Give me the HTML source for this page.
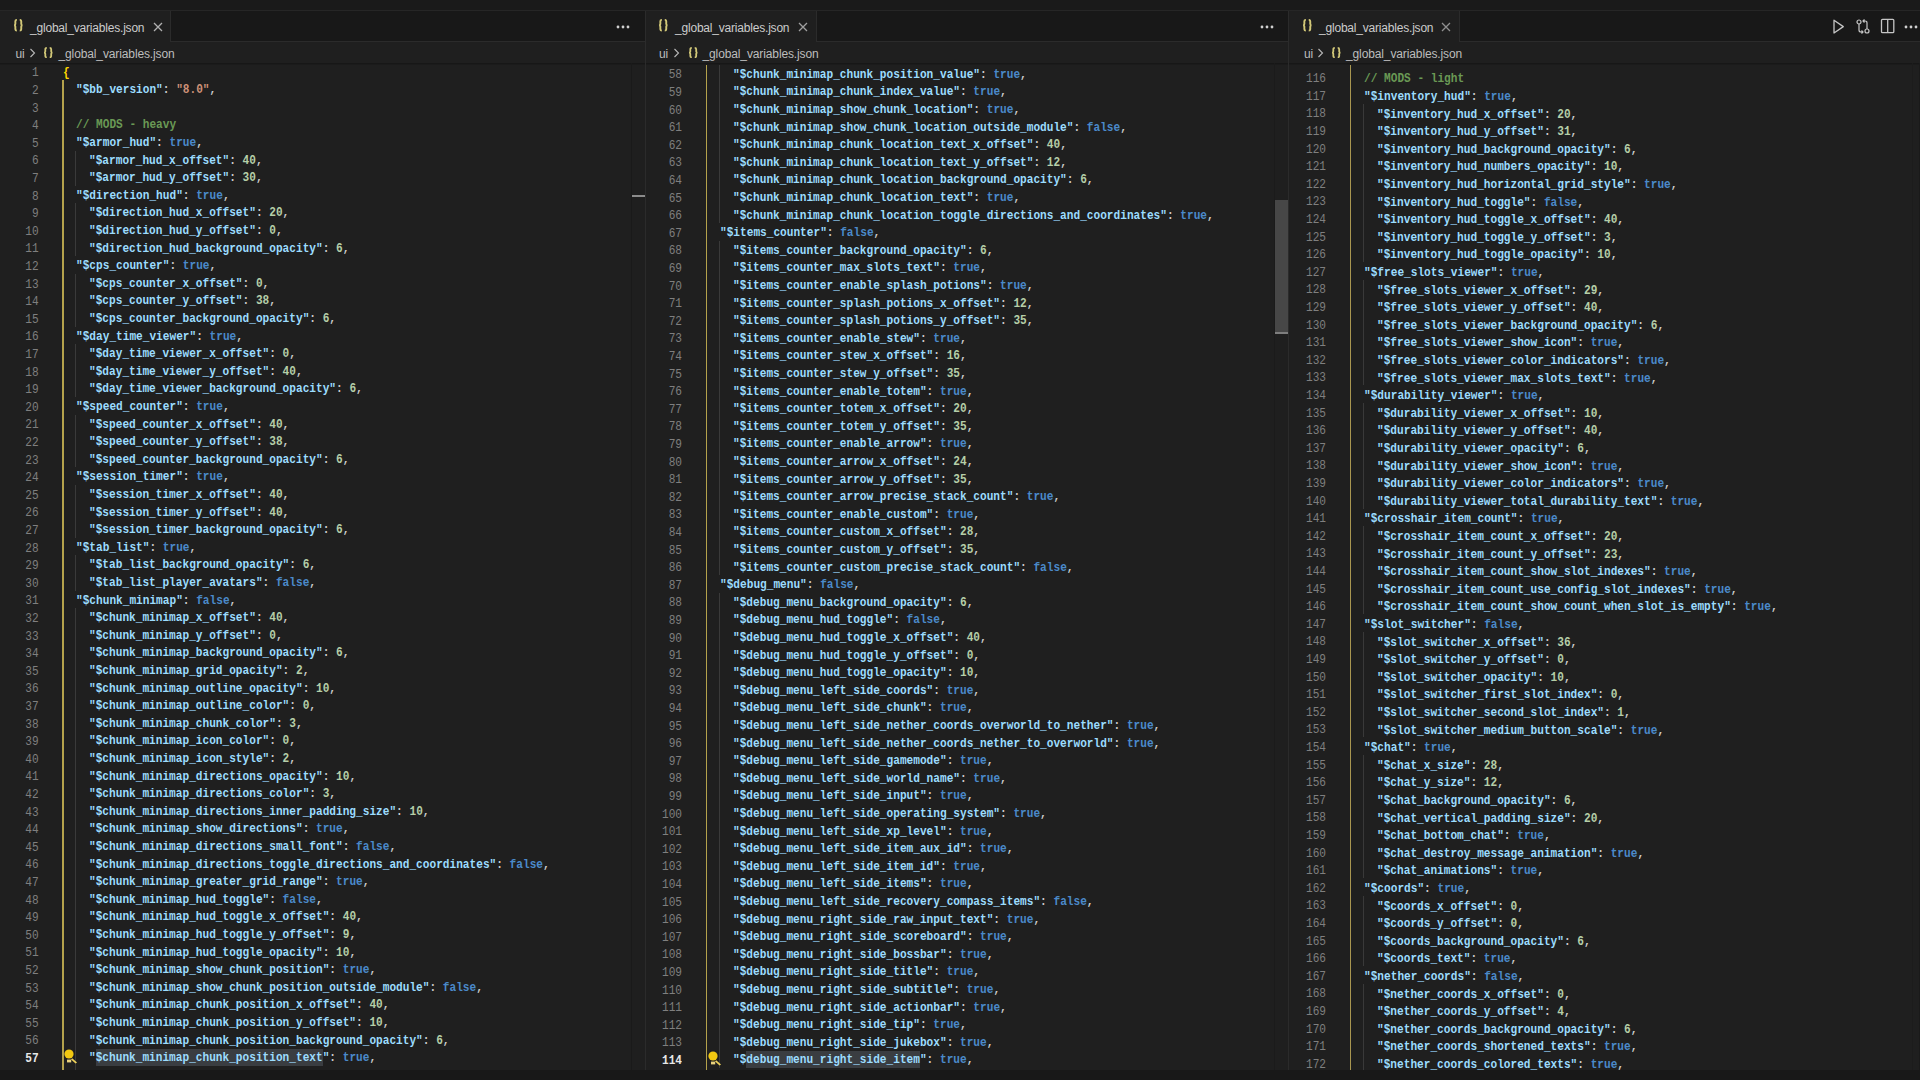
<!DOCTYPE html>
<html><head><meta charset="utf-8"><style>
*{margin:0;padding:0;box-sizing:border-box}
html,body{width:1920px;height:1080px;overflow:hidden;background:#181818}
body{position:relative;font-family:"Liberation Sans",sans-serif}
.ed{position:absolute;background:#1f1f1f;overflow:hidden}
.ln{position:absolute;white-space:pre;font-family:"Liberation Mono",monospace;font-size:12.6px;transform:scaleX(0.88336);transform-origin:0 0;font-weight:bold;line-height:17.6px;height:17.6px;color:#cccccc}
.lnum{position:absolute;left:0;text-align:right;font-family:"Liberation Mono",monospace;font-size:12px;transform:scaleX(0.927);transform-origin:100% 0;line-height:17.6px;color:#7f7f7f}
.lnum.act{color:#e8e8e8;font-weight:bold}
i{font-style:normal}
.k{color:#9cdcfe} .s{color:#ce9178} .n{color:#b5cea8} .w{color:#4b8aca} .c{color:#6a9955} .b{color:#ffd700}
.yg{position:absolute}
.gg{position:absolute;width:1px}
.sel{position:absolute;background:#3a3d41}
.tl{position:absolute;font-size:12px;line-height:16px;color:#cccccc;letter-spacing:-0.2px;white-space:pre}
.bc{position:absolute;font-size:12px;line-height:16px;color:#bdbdbd;letter-spacing:-0.12px;white-space:pre}
</style></head>
<body>
<div style="position:absolute;left:0;top:0;width:1920px;height:10px;background:#1a1a1a"></div>
<div style="position:absolute;left:0;top:10px;width:1920px;height:1px;background:#262626"></div>
<div style="position:absolute;left:0;top:1070px;width:1920px;height:10px;background:#181818"></div>
<div style="position:absolute;left:645px;top:11px;width:1px;height:1059px;background:#2b2b2b"></div>
<div style="position:absolute;left:1288px;top:11px;width:1px;height:1059px;background:#2b2b2b"></div>
<div style="position:absolute;left:171px;top:41px;width:474px;height:1px;background:#2b2b2b"></div>
<div style="position:absolute;left:0px;top:11px;width:170px;height:31px;background:#1f1f1f"></div>
<div style="position:absolute;left:170px;top:11px;width:1px;height:31px;background:#2b2b2b"></div>
<svg style="position:absolute;left:12.7px;top:19.3px" width="10.6" height="12.5" viewBox="0 0 10.6 12.5"><path d="M3.85 0.90Q2.35 0.90 2.35 2.30V5.05Q2.35 6.25 1.05 6.25Q2.35 6.25 2.35 7.45V10.20Q2.35 11.60 3.85 11.60M6.75 0.90Q8.25 0.90 8.25 2.30V5.05Q8.25 6.25 9.55 6.25Q8.25 6.25 8.25 7.45V10.20Q8.25 11.60 6.75 11.60" stroke="#d2c878" stroke-width="1.9" fill="none"/></svg>
<div class="tl" style="left:30px;top:19.8px">_global_variables.json</div>
<svg style="position:absolute;left:152.5px;top:21.5px" width="10" height="10" viewBox="0 0 10 10"><path d="M1 1L9 9M9 1L1 9" stroke="#b0b0b0" stroke-width="1.3"/></svg>
<svg style="position:absolute;left:616px;top:23.5px" width="14" height="6" viewBox="0 0 14 6"><circle cx="2" cy="3" r="1.4" fill="#d0d0d0"/><circle cx="7" cy="3" r="1.4" fill="#d0d0d0"/><circle cx="12" cy="3" r="1.4" fill="#d0d0d0"/></svg>
<div style="position:absolute;left:0px;top:42px;width:645px;height:21px;background:#1f1f1f"></div>
<div class="bc" style="left:15.5px;top:46px">ui</div>
<svg style="position:absolute;left:29px;top:48px" width="7" height="10" viewBox="0 0 7 10"><path d="M1.5 1L5.5 5L1.5 9" stroke="#b8b8b8" stroke-width="1.1" fill="none"/></svg>
<svg style="position:absolute;left:43px;top:47.3px" width="10.5" height="11.2" viewBox="0 0 10.5 11.2"><path d="M3.80 0.90Q2.30 0.90 2.30 2.30V4.40Q2.30 5.60 1.00 5.60Q2.30 5.60 2.30 6.80V8.90Q2.30 10.30 3.80 10.30M6.70 0.90Q8.20 0.90 8.20 2.30V4.40Q8.20 5.60 9.50 5.60Q8.20 5.60 8.20 6.80V8.90Q8.20 10.30 6.70 10.30" stroke="#d2c878" stroke-width="1.8" fill="none"/></svg>
<div class="bc" style="left:58.5px;top:46px">_global_variables.json</div>
<div style="position:absolute;left:817px;top:41px;width:471px;height:1px;background:#2b2b2b"></div>
<div style="position:absolute;left:646px;top:11px;width:170px;height:31px;background:#1f1f1f"></div>
<div style="position:absolute;left:816px;top:11px;width:1px;height:31px;background:#2b2b2b"></div>
<svg style="position:absolute;left:657.7px;top:19.3px" width="10.6" height="12.5" viewBox="0 0 10.6 12.5"><path d="M3.85 0.90Q2.35 0.90 2.35 2.30V5.05Q2.35 6.25 1.05 6.25Q2.35 6.25 2.35 7.45V10.20Q2.35 11.60 3.85 11.60M6.75 0.90Q8.25 0.90 8.25 2.30V5.05Q8.25 6.25 9.55 6.25Q8.25 6.25 8.25 7.45V10.20Q8.25 11.60 6.75 11.60" stroke="#d2c878" stroke-width="1.9" fill="none"/></svg>
<div class="tl" style="left:675px;top:19.8px">_global_variables.json</div>
<svg style="position:absolute;left:797.5px;top:21.5px" width="10" height="10" viewBox="0 0 10 10"><path d="M1 1L9 9M9 1L1 9" stroke="#a0a0a0" stroke-width="1.3"/></svg>
<svg style="position:absolute;left:1260px;top:23.5px" width="14" height="6" viewBox="0 0 14 6"><circle cx="2" cy="3" r="1.4" fill="#d0d0d0"/><circle cx="7" cy="3" r="1.4" fill="#d0d0d0"/><circle cx="12" cy="3" r="1.4" fill="#d0d0d0"/></svg>
<div style="position:absolute;left:646px;top:42px;width:642px;height:21px;background:#1f1f1f"></div>
<div class="bc" style="left:659px;top:46px">ui</div>
<svg style="position:absolute;left:673px;top:48px" width="7" height="10" viewBox="0 0 7 10"><path d="M1.5 1L5.5 5L1.5 9" stroke="#b8b8b8" stroke-width="1.1" fill="none"/></svg>
<svg style="position:absolute;left:687.5px;top:47.3px" width="10.5" height="11.2" viewBox="0 0 10.5 11.2"><path d="M3.80 0.90Q2.30 0.90 2.30 2.30V4.40Q2.30 5.60 1.00 5.60Q2.30 5.60 2.30 6.80V8.90Q2.30 10.30 3.80 10.30M6.70 0.90Q8.20 0.90 8.20 2.30V4.40Q8.20 5.60 9.50 5.60Q8.20 5.60 8.20 6.80V8.90Q8.20 10.30 6.70 10.30" stroke="#d2c878" stroke-width="1.8" fill="none"/></svg>
<div class="bc" style="left:702.5px;top:46px">_global_variables.json</div>
<div style="position:absolute;left:1460px;top:41px;width:460px;height:1px;background:#2b2b2b"></div>
<div style="position:absolute;left:1289px;top:11px;width:170px;height:31px;background:#1f1f1f"></div>
<div style="position:absolute;left:1459px;top:11px;width:1px;height:31px;background:#2b2b2b"></div>
<svg style="position:absolute;left:1301.7px;top:19.3px" width="10.6" height="12.5" viewBox="0 0 10.6 12.5"><path d="M3.85 0.90Q2.35 0.90 2.35 2.30V5.05Q2.35 6.25 1.05 6.25Q2.35 6.25 2.35 7.45V10.20Q2.35 11.60 3.85 11.60M6.75 0.90Q8.25 0.90 8.25 2.30V5.05Q8.25 6.25 9.55 6.25Q8.25 6.25 8.25 7.45V10.20Q8.25 11.60 6.75 11.60" stroke="#d2c878" stroke-width="1.9" fill="none"/></svg>
<div class="tl" style="left:1319px;top:19.8px">_global_variables.json</div>
<svg style="position:absolute;left:1441px;top:21.5px" width="10" height="10" viewBox="0 0 10 10"><path d="M1 1L9 9M9 1L1 9" stroke="#909090" stroke-width="1.3"/></svg>
<div style="position:absolute;left:1289px;top:42px;width:631px;height:21px;background:#1f1f1f"></div>
<div class="bc" style="left:1304px;top:46px">ui</div>
<svg style="position:absolute;left:1316.5px;top:48px" width="7" height="10" viewBox="0 0 7 10"><path d="M1.5 1L5.5 5L1.5 9" stroke="#b8b8b8" stroke-width="1.1" fill="none"/></svg>
<svg style="position:absolute;left:1331px;top:47.3px" width="10.5" height="11.2" viewBox="0 0 10.5 11.2"><path d="M3.80 0.90Q2.30 0.90 2.30 2.30V4.40Q2.30 5.60 1.00 5.60Q2.30 5.60 2.30 6.80V8.90Q2.30 10.30 3.80 10.30M6.70 0.90Q8.20 0.90 8.20 2.30V4.40Q8.20 5.60 9.50 5.60Q8.20 5.60 8.20 6.80V8.90Q8.20 10.30 6.70 10.30" stroke="#d2c878" stroke-width="1.8" fill="none"/></svg>
<div class="bc" style="left:1346px;top:46px">_global_variables.json</div>
<svg style="position:absolute;left:1831px;top:18px" width="14" height="17" viewBox="0 0 14 17"><path d="M3 2.2L12.3 8.6L3 15Z" stroke="#c5c5c5" stroke-width="1.3" fill="none" stroke-linejoin="round"/></svg>
<svg style="position:absolute;left:1854.5px;top:18px" width="16" height="17" viewBox="0 0 16 17"><circle cx="4" cy="4" r="2" stroke="#c5c5c5" stroke-width="1.2" fill="none"/><circle cx="12" cy="13" r="2" stroke="#c5c5c5" stroke-width="1.2" fill="none"/><path d="M4 6V12Q4 14 6 14H8M12 11V5Q12 3 10 3H8M9.5 1.5L8 3L9.5 4.5M6.5 12.5L8 14L6.5 15.5" stroke="#c5c5c5" stroke-width="1.2" fill="none"/></svg>
<svg style="position:absolute;left:1880px;top:18px" width="16" height="16" viewBox="0 0 16 16"><rect x="1.5" y="1.3" width="12.3" height="13.4" rx="1" stroke="#c5c5c5" stroke-width="1.3" fill="none"/><path d="M7.7 1.5V14.5" stroke="#c5c5c5" stroke-width="1.3"/></svg>
<svg style="position:absolute;left:1904px;top:23.5px" width="14" height="6" viewBox="0 0 14 6"><circle cx="2" cy="3" r="1.4" fill="#d0d0d0"/><circle cx="7" cy="3" r="1.4" fill="#d0d0d0"/><circle cx="12" cy="3" r="1.4" fill="#d0d0d0"/></svg><div class="ed" style="left:0px;top:63px;width:645px;height:1007px">
<div class="yg" style="left:62.00px;top:17.20px;height:1029.80px;width:1.7px;background:#b4a24c"></div>
<div class="gg" style="left:75.35px;top:87.60px;height:35.20px;background:#3a3a3a"></div>
<div class="gg" style="left:75.35px;top:140.40px;height:52.80px;background:#3a3a3a"></div>
<div class="gg" style="left:75.35px;top:210.80px;height:52.80px;background:#3a3a3a"></div>
<div class="gg" style="left:75.35px;top:281.20px;height:52.80px;background:#3a3a3a"></div>
<div class="gg" style="left:75.35px;top:351.60px;height:52.80px;background:#3a3a3a"></div>
<div class="gg" style="left:75.35px;top:422.00px;height:52.80px;background:#3a3a3a"></div>
<div class="gg" style="left:75.35px;top:492.40px;height:35.20px;background:#3a3a3a"></div>
<div class="gg" style="left:75.35px;top:545.20px;height:475.20px;background:#3a3a3a"></div>
<div class="sel" style="left:95.98px;top:985.60px;width:226.98px;height:17.60px"></div>
<div class="lnum" style="top:2.30px;width:38.60px">1</div>
<div class="ln" style="top:1.60px;left:62.60px"><i class="b">{</i></div>
<div class="lnum" style="top:19.90px;width:38.60px">2</div>
<div class="ln" style="top:19.20px;left:75.95px"><i class="k">"$bb_version"</i>: <i class="s">"8.0"</i>,</div>
<div class="lnum" style="top:37.50px;width:38.60px">3</div>
<div class="lnum" style="top:55.10px;width:38.60px">4</div>
<div class="ln" style="top:54.40px;left:75.95px"><i class="c">// MODS - heavy</i></div>
<div class="lnum" style="top:72.70px;width:38.60px">5</div>
<div class="ln" style="top:72.00px;left:75.95px"><i class="k">"$armor_hud"</i>: <i class="w">true</i>,</div>
<div class="lnum" style="top:90.30px;width:38.60px">6</div>
<div class="ln" style="top:89.60px;left:89.30px"><i class="k">"$armor_hud_x_offset"</i>: <i class="n">40</i>,</div>
<div class="lnum" style="top:107.90px;width:38.60px">7</div>
<div class="ln" style="top:107.20px;left:89.30px"><i class="k">"$armor_hud_y_offset"</i>: <i class="n">30</i>,</div>
<div class="lnum" style="top:125.50px;width:38.60px">8</div>
<div class="ln" style="top:124.80px;left:75.95px"><i class="k">"$direction_hud"</i>: <i class="w">true</i>,</div>
<div class="lnum" style="top:143.10px;width:38.60px">9</div>
<div class="ln" style="top:142.40px;left:89.30px"><i class="k">"$direction_hud_x_offset"</i>: <i class="n">20</i>,</div>
<div class="lnum" style="top:160.70px;width:38.60px">10</div>
<div class="ln" style="top:160.00px;left:89.30px"><i class="k">"$direction_hud_y_offset"</i>: <i class="n">0</i>,</div>
<div class="lnum" style="top:178.30px;width:38.60px">11</div>
<div class="ln" style="top:177.60px;left:89.30px"><i class="k">"$direction_hud_background_opacity"</i>: <i class="n">6</i>,</div>
<div class="lnum" style="top:195.90px;width:38.60px">12</div>
<div class="ln" style="top:195.20px;left:75.95px"><i class="k">"$cps_counter"</i>: <i class="w">true</i>,</div>
<div class="lnum" style="top:213.50px;width:38.60px">13</div>
<div class="ln" style="top:212.80px;left:89.30px"><i class="k">"$cps_counter_x_offset"</i>: <i class="n">0</i>,</div>
<div class="lnum" style="top:231.10px;width:38.60px">14</div>
<div class="ln" style="top:230.40px;left:89.30px"><i class="k">"$cps_counter_y_offset"</i>: <i class="n">38</i>,</div>
<div class="lnum" style="top:248.70px;width:38.60px">15</div>
<div class="ln" style="top:248.00px;left:89.30px"><i class="k">"$cps_counter_background_opacity"</i>: <i class="n">6</i>,</div>
<div class="lnum" style="top:266.30px;width:38.60px">16</div>
<div class="ln" style="top:265.60px;left:75.95px"><i class="k">"$day_time_viewer"</i>: <i class="w">true</i>,</div>
<div class="lnum" style="top:283.90px;width:38.60px">17</div>
<div class="ln" style="top:283.20px;left:89.30px"><i class="k">"$day_time_viewer_x_offset"</i>: <i class="n">0</i>,</div>
<div class="lnum" style="top:301.50px;width:38.60px">18</div>
<div class="ln" style="top:300.80px;left:89.30px"><i class="k">"$day_time_viewer_y_offset"</i>: <i class="n">40</i>,</div>
<div class="lnum" style="top:319.10px;width:38.60px">19</div>
<div class="ln" style="top:318.40px;left:89.30px"><i class="k">"$day_time_viewer_background_opacity"</i>: <i class="n">6</i>,</div>
<div class="lnum" style="top:336.70px;width:38.60px">20</div>
<div class="ln" style="top:336.00px;left:75.95px"><i class="k">"$speed_counter"</i>: <i class="w">true</i>,</div>
<div class="lnum" style="top:354.30px;width:38.60px">21</div>
<div class="ln" style="top:353.60px;left:89.30px"><i class="k">"$speed_counter_x_offset"</i>: <i class="n">40</i>,</div>
<div class="lnum" style="top:371.90px;width:38.60px">22</div>
<div class="ln" style="top:371.20px;left:89.30px"><i class="k">"$speed_counter_y_offset"</i>: <i class="n">38</i>,</div>
<div class="lnum" style="top:389.50px;width:38.60px">23</div>
<div class="ln" style="top:388.80px;left:89.30px"><i class="k">"$speed_counter_background_opacity"</i>: <i class="n">6</i>,</div>
<div class="lnum" style="top:407.10px;width:38.60px">24</div>
<div class="ln" style="top:406.40px;left:75.95px"><i class="k">"$session_timer"</i>: <i class="w">true</i>,</div>
<div class="lnum" style="top:424.70px;width:38.60px">25</div>
<div class="ln" style="top:424.00px;left:89.30px"><i class="k">"$session_timer_x_offset"</i>: <i class="n">40</i>,</div>
<div class="lnum" style="top:442.30px;width:38.60px">26</div>
<div class="ln" style="top:441.60px;left:89.30px"><i class="k">"$session_timer_y_offset"</i>: <i class="n">40</i>,</div>
<div class="lnum" style="top:459.90px;width:38.60px">27</div>
<div class="ln" style="top:459.20px;left:89.30px"><i class="k">"$session_timer_background_opacity"</i>: <i class="n">6</i>,</div>
<div class="lnum" style="top:477.50px;width:38.60px">28</div>
<div class="ln" style="top:476.80px;left:75.95px"><i class="k">"$tab_list"</i>: <i class="w">true</i>,</div>
<div class="lnum" style="top:495.10px;width:38.60px">29</div>
<div class="ln" style="top:494.40px;left:89.30px"><i class="k">"$tab_list_background_opacity"</i>: <i class="n">6</i>,</div>
<div class="lnum" style="top:512.70px;width:38.60px">30</div>
<div class="ln" style="top:512.00px;left:89.30px"><i class="k">"$tab_list_player_avatars"</i>: <i class="w">false</i>,</div>
<div class="lnum" style="top:530.30px;width:38.60px">31</div>
<div class="ln" style="top:529.60px;left:75.95px"><i class="k">"$chunk_minimap"</i>: <i class="w">false</i>,</div>
<div class="lnum" style="top:547.90px;width:38.60px">32</div>
<div class="ln" style="top:547.20px;left:89.30px"><i class="k">"$chunk_minimap_x_offset"</i>: <i class="n">40</i>,</div>
<div class="lnum" style="top:565.50px;width:38.60px">33</div>
<div class="ln" style="top:564.80px;left:89.30px"><i class="k">"$chunk_minimap_y_offset"</i>: <i class="n">0</i>,</div>
<div class="lnum" style="top:583.10px;width:38.60px">34</div>
<div class="ln" style="top:582.40px;left:89.30px"><i class="k">"$chunk_minimap_background_opacity"</i>: <i class="n">6</i>,</div>
<div class="lnum" style="top:600.70px;width:38.60px">35</div>
<div class="ln" style="top:600.00px;left:89.30px"><i class="k">"$chunk_minimap_grid_opacity"</i>: <i class="n">2</i>,</div>
<div class="lnum" style="top:618.30px;width:38.60px">36</div>
<div class="ln" style="top:617.60px;left:89.30px"><i class="k">"$chunk_minimap_outline_opacity"</i>: <i class="n">10</i>,</div>
<div class="lnum" style="top:635.90px;width:38.60px">37</div>
<div class="ln" style="top:635.20px;left:89.30px"><i class="k">"$chunk_minimap_outline_color"</i>: <i class="n">0</i>,</div>
<div class="lnum" style="top:653.50px;width:38.60px">38</div>
<div class="ln" style="top:652.80px;left:89.30px"><i class="k">"$chunk_minimap_chunk_color"</i>: <i class="n">3</i>,</div>
<div class="lnum" style="top:671.10px;width:38.60px">39</div>
<div class="ln" style="top:670.40px;left:89.30px"><i class="k">"$chunk_minimap_icon_color"</i>: <i class="n">0</i>,</div>
<div class="lnum" style="top:688.70px;width:38.60px">40</div>
<div class="ln" style="top:688.00px;left:89.30px"><i class="k">"$chunk_minimap_icon_style"</i>: <i class="n">2</i>,</div>
<div class="lnum" style="top:706.30px;width:38.60px">41</div>
<div class="ln" style="top:705.60px;left:89.30px"><i class="k">"$chunk_minimap_directions_opacity"</i>: <i class="n">10</i>,</div>
<div class="lnum" style="top:723.90px;width:38.60px">42</div>
<div class="ln" style="top:723.20px;left:89.30px"><i class="k">"$chunk_minimap_directions_color"</i>: <i class="n">3</i>,</div>
<div class="lnum" style="top:741.50px;width:38.60px">43</div>
<div class="ln" style="top:740.80px;left:89.30px"><i class="k">"$chunk_minimap_directions_inner_padding_size"</i>: <i class="n">10</i>,</div>
<div class="lnum" style="top:759.10px;width:38.60px">44</div>
<div class="ln" style="top:758.40px;left:89.30px"><i class="k">"$chunk_minimap_show_directions"</i>: <i class="w">true</i>,</div>
<div class="lnum" style="top:776.70px;width:38.60px">45</div>
<div class="ln" style="top:776.00px;left:89.30px"><i class="k">"$chunk_minimap_directions_small_font"</i>: <i class="w">false</i>,</div>
<div class="lnum" style="top:794.30px;width:38.60px">46</div>
<div class="ln" style="top:793.60px;left:89.30px"><i class="k">"$chunk_minimap_directions_toggle_directions_and_coordinates"</i>: <i class="w">false</i>,</div>
<div class="lnum" style="top:811.90px;width:38.60px">47</div>
<div class="ln" style="top:811.20px;left:89.30px"><i class="k">"$chunk_minimap_greater_grid_range"</i>: <i class="w">true</i>,</div>
<div class="lnum" style="top:829.50px;width:38.60px">48</div>
<div class="ln" style="top:828.80px;left:89.30px"><i class="k">"$chunk_minimap_hud_toggle"</i>: <i class="w">false</i>,</div>
<div class="lnum" style="top:847.10px;width:38.60px">49</div>
<div class="ln" style="top:846.40px;left:89.30px"><i class="k">"$chunk_minimap_hud_toggle_x_offset"</i>: <i class="n">40</i>,</div>
<div class="lnum" style="top:864.70px;width:38.60px">50</div>
<div class="ln" style="top:864.00px;left:89.30px"><i class="k">"$chunk_minimap_hud_toggle_y_offset"</i>: <i class="n">9</i>,</div>
<div class="lnum" style="top:882.30px;width:38.60px">51</div>
<div class="ln" style="top:881.60px;left:89.30px"><i class="k">"$chunk_minimap_hud_toggle_opacity"</i>: <i class="n">10</i>,</div>
<div class="lnum" style="top:899.90px;width:38.60px">52</div>
<div class="ln" style="top:899.20px;left:89.30px"><i class="k">"$chunk_minimap_show_chunk_position"</i>: <i class="w">true</i>,</div>
<div class="lnum" style="top:917.50px;width:38.60px">53</div>
<div class="ln" style="top:916.80px;left:89.30px"><i class="k">"$chunk_minimap_show_chunk_position_outside_module"</i>: <i class="w">false</i>,</div>
<div class="lnum" style="top:935.10px;width:38.60px">54</div>
<div class="ln" style="top:934.40px;left:89.30px"><i class="k">"$chunk_minimap_chunk_position_x_offset"</i>: <i class="n">40</i>,</div>
<div class="lnum" style="top:952.70px;width:38.60px">55</div>
<div class="ln" style="top:952.00px;left:89.30px"><i class="k">"$chunk_minimap_chunk_position_y_offset"</i>: <i class="n">10</i>,</div>
<div class="lnum" style="top:970.30px;width:38.60px">56</div>
<div class="ln" style="top:969.60px;left:89.30px"><i class="k">"$chunk_minimap_chunk_position_background_opacity"</i>: <i class="n">6</i>,</div>
<div class="lnum act" style="top:987.90px;width:38.60px">57</div>
<div class="ln" style="top:987.20px;left:89.30px"><i class="k">"$chunk_minimap_chunk_position_text"</i>: <i class="w">true</i>,</div>
<svg style="position:absolute;left:64.00px;top:985.80px" width="14" height="15" viewBox="0 0 14 15"><circle cx="5" cy="5" r="4.6" fill="#f2c811"/><rect x="3" y="10.6" width="4.2" height="2.8" fill="#e9d27e"/><path d="M8.2 9.2L13 13.6L11.6 14.6L7 10.6Z" fill="#efd25a"/></svg>
<div class="lnum" style="top:1005.50px;width:38.60px">58</div>
<div class="ln" style="top:1004.80px;left:89.30px"><i class="k">"$chunk_minimap_chunk_position_value"</i>: <i class="w">true</i>,</div>
<div style="position:absolute;left:0;top:0;width:645px;height:1px;background:#171717"></div>
<div style="position:absolute;left:0;top:1px;width:645px;height:1px;background:#1b1b1b"></div>
</div><div class="ed" style="left:646px;top:63px;width:642px;height:1007px">
<div class="yg" style="left:59.80px;top:-20.00px;height:1067.00px;width:1.7px;background:#b4a24c"></div>
<div class="gg" style="left:73.15px;top:1.70px;height:158.40px;background:#3a3a3a"></div>
<div class="gg" style="left:73.15px;top:177.70px;height:334.40px;background:#3a3a3a"></div>
<div class="gg" style="left:73.15px;top:529.70px;height:475.20px;background:#3a3a3a"></div>
<div class="sel" style="left:100.46px;top:987.70px;width:173.58px;height:17.60px"></div>
<div class="lnum" style="top:4.40px;width:36.00px">58</div>
<div class="ln" style="top:3.70px;left:87.10px"><i class="k">"$chunk_minimap_chunk_position_value"</i>: <i class="w">true</i>,</div>
<div class="lnum" style="top:22.00px;width:36.00px">59</div>
<div class="ln" style="top:21.30px;left:87.10px"><i class="k">"$chunk_minimap_chunk_index_value"</i>: <i class="w">true</i>,</div>
<div class="lnum" style="top:39.60px;width:36.00px">60</div>
<div class="ln" style="top:38.90px;left:87.10px"><i class="k">"$chunk_minimap_show_chunk_location"</i>: <i class="w">true</i>,</div>
<div class="lnum" style="top:57.20px;width:36.00px">61</div>
<div class="ln" style="top:56.50px;left:87.10px"><i class="k">"$chunk_minimap_show_chunk_location_outside_module"</i>: <i class="w">false</i>,</div>
<div class="lnum" style="top:74.80px;width:36.00px">62</div>
<div class="ln" style="top:74.10px;left:87.10px"><i class="k">"$chunk_minimap_chunk_location_text_x_offset"</i>: <i class="n">40</i>,</div>
<div class="lnum" style="top:92.40px;width:36.00px">63</div>
<div class="ln" style="top:91.70px;left:87.10px"><i class="k">"$chunk_minimap_chunk_location_text_y_offset"</i>: <i class="n">12</i>,</div>
<div class="lnum" style="top:110.00px;width:36.00px">64</div>
<div class="ln" style="top:109.30px;left:87.10px"><i class="k">"$chunk_minimap_chunk_location_background_opacity"</i>: <i class="n">6</i>,</div>
<div class="lnum" style="top:127.60px;width:36.00px">65</div>
<div class="ln" style="top:126.90px;left:87.10px"><i class="k">"$chunk_minimap_chunk_location_text"</i>: <i class="w">true</i>,</div>
<div class="lnum" style="top:145.20px;width:36.00px">66</div>
<div class="ln" style="top:144.50px;left:87.10px"><i class="k">"$chunk_minimap_chunk_location_toggle_directions_and_coordinates"</i>: <i class="w">true</i>,</div>
<div class="lnum" style="top:162.80px;width:36.00px">67</div>
<div class="ln" style="top:162.10px;left:73.75px"><i class="k">"$items_counter"</i>: <i class="w">false</i>,</div>
<div class="lnum" style="top:180.40px;width:36.00px">68</div>
<div class="ln" style="top:179.70px;left:87.10px"><i class="k">"$items_counter_background_opacity"</i>: <i class="n">6</i>,</div>
<div class="lnum" style="top:198.00px;width:36.00px">69</div>
<div class="ln" style="top:197.30px;left:87.10px"><i class="k">"$items_counter_max_slots_text"</i>: <i class="w">true</i>,</div>
<div class="lnum" style="top:215.60px;width:36.00px">70</div>
<div class="ln" style="top:214.90px;left:87.10px"><i class="k">"$items_counter_enable_splash_potions"</i>: <i class="w">true</i>,</div>
<div class="lnum" style="top:233.20px;width:36.00px">71</div>
<div class="ln" style="top:232.50px;left:87.10px"><i class="k">"$items_counter_splash_potions_x_offset"</i>: <i class="n">12</i>,</div>
<div class="lnum" style="top:250.80px;width:36.00px">72</div>
<div class="ln" style="top:250.10px;left:87.10px"><i class="k">"$items_counter_splash_potions_y_offset"</i>: <i class="n">35</i>,</div>
<div class="lnum" style="top:268.40px;width:36.00px">73</div>
<div class="ln" style="top:267.70px;left:87.10px"><i class="k">"$items_counter_enable_stew"</i>: <i class="w">true</i>,</div>
<div class="lnum" style="top:286.00px;width:36.00px">74</div>
<div class="ln" style="top:285.30px;left:87.10px"><i class="k">"$items_counter_stew_x_offset"</i>: <i class="n">16</i>,</div>
<div class="lnum" style="top:303.60px;width:36.00px">75</div>
<div class="ln" style="top:302.90px;left:87.10px"><i class="k">"$items_counter_stew_y_offset"</i>: <i class="n">35</i>,</div>
<div class="lnum" style="top:321.20px;width:36.00px">76</div>
<div class="ln" style="top:320.50px;left:87.10px"><i class="k">"$items_counter_enable_totem"</i>: <i class="w">true</i>,</div>
<div class="lnum" style="top:338.80px;width:36.00px">77</div>
<div class="ln" style="top:338.10px;left:87.10px"><i class="k">"$items_counter_totem_x_offset"</i>: <i class="n">20</i>,</div>
<div class="lnum" style="top:356.40px;width:36.00px">78</div>
<div class="ln" style="top:355.70px;left:87.10px"><i class="k">"$items_counter_totem_y_offset"</i>: <i class="n">35</i>,</div>
<div class="lnum" style="top:374.00px;width:36.00px">79</div>
<div class="ln" style="top:373.30px;left:87.10px"><i class="k">"$items_counter_enable_arrow"</i>: <i class="w">true</i>,</div>
<div class="lnum" style="top:391.60px;width:36.00px">80</div>
<div class="ln" style="top:390.90px;left:87.10px"><i class="k">"$items_counter_arrow_x_offset"</i>: <i class="n">24</i>,</div>
<div class="lnum" style="top:409.20px;width:36.00px">81</div>
<div class="ln" style="top:408.50px;left:87.10px"><i class="k">"$items_counter_arrow_y_offset"</i>: <i class="n">35</i>,</div>
<div class="lnum" style="top:426.80px;width:36.00px">82</div>
<div class="ln" style="top:426.10px;left:87.10px"><i class="k">"$items_counter_arrow_precise_stack_count"</i>: <i class="w">true</i>,</div>
<div class="lnum" style="top:444.40px;width:36.00px">83</div>
<div class="ln" style="top:443.70px;left:87.10px"><i class="k">"$items_counter_enable_custom"</i>: <i class="w">true</i>,</div>
<div class="lnum" style="top:462.00px;width:36.00px">84</div>
<div class="ln" style="top:461.30px;left:87.10px"><i class="k">"$items_counter_custom_x_offset"</i>: <i class="n">28</i>,</div>
<div class="lnum" style="top:479.60px;width:36.00px">85</div>
<div class="ln" style="top:478.90px;left:87.10px"><i class="k">"$items_counter_custom_y_offset"</i>: <i class="n">35</i>,</div>
<div class="lnum" style="top:497.20px;width:36.00px">86</div>
<div class="ln" style="top:496.50px;left:87.10px"><i class="k">"$items_counter_custom_precise_stack_count"</i>: <i class="w">false</i>,</div>
<div class="lnum" style="top:514.80px;width:36.00px">87</div>
<div class="ln" style="top:514.10px;left:73.75px"><i class="k">"$debug_menu"</i>: <i class="w">false</i>,</div>
<div class="lnum" style="top:532.40px;width:36.00px">88</div>
<div class="ln" style="top:531.70px;left:87.10px"><i class="k">"$debug_menu_background_opacity"</i>: <i class="n">6</i>,</div>
<div class="lnum" style="top:550.00px;width:36.00px">89</div>
<div class="ln" style="top:549.30px;left:87.10px"><i class="k">"$debug_menu_hud_toggle"</i>: <i class="w">false</i>,</div>
<div class="lnum" style="top:567.60px;width:36.00px">90</div>
<div class="ln" style="top:566.90px;left:87.10px"><i class="k">"$debug_menu_hud_toggle_x_offset"</i>: <i class="n">40</i>,</div>
<div class="lnum" style="top:585.20px;width:36.00px">91</div>
<div class="ln" style="top:584.50px;left:87.10px"><i class="k">"$debug_menu_hud_toggle_y_offset"</i>: <i class="n">0</i>,</div>
<div class="lnum" style="top:602.80px;width:36.00px">92</div>
<div class="ln" style="top:602.10px;left:87.10px"><i class="k">"$debug_menu_hud_toggle_opacity"</i>: <i class="n">10</i>,</div>
<div class="lnum" style="top:620.40px;width:36.00px">93</div>
<div class="ln" style="top:619.70px;left:87.10px"><i class="k">"$debug_menu_left_side_coords"</i>: <i class="w">true</i>,</div>
<div class="lnum" style="top:638.00px;width:36.00px">94</div>
<div class="ln" style="top:637.30px;left:87.10px"><i class="k">"$debug_menu_left_side_chunk"</i>: <i class="w">true</i>,</div>
<div class="lnum" style="top:655.60px;width:36.00px">95</div>
<div class="ln" style="top:654.90px;left:87.10px"><i class="k">"$debug_menu_left_side_nether_coords_overworld_to_nether"</i>: <i class="w">true</i>,</div>
<div class="lnum" style="top:673.20px;width:36.00px">96</div>
<div class="ln" style="top:672.50px;left:87.10px"><i class="k">"$debug_menu_left_side_nether_coords_nether_to_overworld"</i>: <i class="w">true</i>,</div>
<div class="lnum" style="top:690.80px;width:36.00px">97</div>
<div class="ln" style="top:690.10px;left:87.10px"><i class="k">"$debug_menu_left_side_gamemode"</i>: <i class="w">true</i>,</div>
<div class="lnum" style="top:708.40px;width:36.00px">98</div>
<div class="ln" style="top:707.70px;left:87.10px"><i class="k">"$debug_menu_left_side_world_name"</i>: <i class="w">true</i>,</div>
<div class="lnum" style="top:726.00px;width:36.00px">99</div>
<div class="ln" style="top:725.30px;left:87.10px"><i class="k">"$debug_menu_left_side_input"</i>: <i class="w">true</i>,</div>
<div class="lnum" style="top:743.60px;width:36.00px">100</div>
<div class="ln" style="top:742.90px;left:87.10px"><i class="k">"$debug_menu_left_side_operating_system"</i>: <i class="w">true</i>,</div>
<div class="lnum" style="top:761.20px;width:36.00px">101</div>
<div class="ln" style="top:760.50px;left:87.10px"><i class="k">"$debug_menu_left_side_xp_level"</i>: <i class="w">true</i>,</div>
<div class="lnum" style="top:778.80px;width:36.00px">102</div>
<div class="ln" style="top:778.10px;left:87.10px"><i class="k">"$debug_menu_left_side_item_aux_id"</i>: <i class="w">true</i>,</div>
<div class="lnum" style="top:796.40px;width:36.00px">103</div>
<div class="ln" style="top:795.70px;left:87.10px"><i class="k">"$debug_menu_left_side_item_id"</i>: <i class="w">true</i>,</div>
<div class="lnum" style="top:814.00px;width:36.00px">104</div>
<div class="ln" style="top:813.30px;left:87.10px"><i class="k">"$debug_menu_left_side_items"</i>: <i class="w">true</i>,</div>
<div class="lnum" style="top:831.60px;width:36.00px">105</div>
<div class="ln" style="top:830.90px;left:87.10px"><i class="k">"$debug_menu_left_side_recovery_compass_items"</i>: <i class="w">false</i>,</div>
<div class="lnum" style="top:849.20px;width:36.00px">106</div>
<div class="ln" style="top:848.50px;left:87.10px"><i class="k">"$debug_menu_right_side_raw_input_text"</i>: <i class="w">true</i>,</div>
<div class="lnum" style="top:866.80px;width:36.00px">107</div>
<div class="ln" style="top:866.10px;left:87.10px"><i class="k">"$debug_menu_right_side_scoreboard"</i>: <i class="w">true</i>,</div>
<div class="lnum" style="top:884.40px;width:36.00px">108</div>
<div class="ln" style="top:883.70px;left:87.10px"><i class="k">"$debug_menu_right_side_bossbar"</i>: <i class="w">true</i>,</div>
<div class="lnum" style="top:902.00px;width:36.00px">109</div>
<div class="ln" style="top:901.30px;left:87.10px"><i class="k">"$debug_menu_right_side_title"</i>: <i class="w">true</i>,</div>
<div class="lnum" style="top:919.60px;width:36.00px">110</div>
<div class="ln" style="top:918.90px;left:87.10px"><i class="k">"$debug_menu_right_side_subtitle"</i>: <i class="w">true</i>,</div>
<div class="lnum" style="top:937.20px;width:36.00px">111</div>
<div class="ln" style="top:936.50px;left:87.10px"><i class="k">"$debug_menu_right_side_actionbar"</i>: <i class="w">true</i>,</div>
<div class="lnum" style="top:954.80px;width:36.00px">112</div>
<div class="ln" style="top:954.10px;left:87.10px"><i class="k">"$debug_menu_right_side_tip"</i>: <i class="w">true</i>,</div>
<div class="lnum" style="top:972.40px;width:36.00px">113</div>
<div class="ln" style="top:971.70px;left:87.10px"><i class="k">"$debug_menu_right_side_jukebox"</i>: <i class="w">true</i>,</div>
<div class="lnum act" style="top:990.00px;width:36.00px">114</div>
<div class="ln" style="top:989.30px;left:87.10px"><i class="k">"$debug_menu_right_side_item"</i>: <i class="w">true</i>,</div>
<svg style="position:absolute;left:61.80px;top:987.90px" width="14" height="15" viewBox="0 0 14 15"><circle cx="5" cy="5" r="4.6" fill="#f2c811"/><rect x="3" y="10.6" width="4.2" height="2.8" fill="#e9d27e"/><path d="M8.2 9.2L13 13.6L11.6 14.6L7 10.6Z" fill="#efd25a"/></svg>
<div class="lnum" style="top:1007.60px;width:36.00px">115</div>
<div style="position:absolute;left:0;top:0;width:642px;height:1px;background:#171717"></div>
<div style="position:absolute;left:0;top:1px;width:642px;height:1px;background:#1b1b1b"></div>
</div><div class="ed" style="left:1289px;top:63px;width:631px;height:1007px">
<div class="yg" style="left:60.90px;top:-20.00px;height:1067.00px;width:1.5px;background:#a89650"></div>
<div class="gg" style="left:74.25px;top:40.90px;height:158.40px;background:#393939"></div>
<div class="gg" style="left:74.25px;top:216.90px;height:105.60px;background:#393939"></div>
<div class="gg" style="left:74.25px;top:340.10px;height:105.60px;background:#393939"></div>
<div class="gg" style="left:74.25px;top:463.30px;height:88.00px;background:#393939"></div>
<div class="gg" style="left:74.25px;top:568.90px;height:105.60px;background:#393939"></div>
<div class="gg" style="left:74.25px;top:692.10px;height:123.20px;background:#393939"></div>
<div class="gg" style="left:74.25px;top:832.90px;height:70.40px;background:#393939"></div>
<div class="gg" style="left:74.25px;top:920.90px;height:88.00px;background:#393939"></div>
<div class="lnum" style="top:-9.50px;width:37.00px">115</div>
<div class="lnum" style="top:8.10px;width:37.00px">116</div>
<div class="ln" style="top:8.30px;left:74.85px"><i class="c">// MODS - light</i></div>
<div class="lnum" style="top:25.70px;width:37.00px">117</div>
<div class="ln" style="top:25.90px;left:74.85px"><i class="k">"$inventory_hud"</i>: <i class="w">true</i>,</div>
<div class="lnum" style="top:43.30px;width:37.00px">118</div>
<div class="ln" style="top:43.50px;left:88.20px"><i class="k">"$inventory_hud_x_offset"</i>: <i class="n">20</i>,</div>
<div class="lnum" style="top:60.90px;width:37.00px">119</div>
<div class="ln" style="top:61.10px;left:88.20px"><i class="k">"$inventory_hud_y_offset"</i>: <i class="n">31</i>,</div>
<div class="lnum" style="top:78.50px;width:37.00px">120</div>
<div class="ln" style="top:78.70px;left:88.20px"><i class="k">"$inventory_hud_background_opacity"</i>: <i class="n">6</i>,</div>
<div class="lnum" style="top:96.10px;width:37.00px">121</div>
<div class="ln" style="top:96.30px;left:88.20px"><i class="k">"$inventory_hud_numbers_opacity"</i>: <i class="n">10</i>,</div>
<div class="lnum" style="top:113.70px;width:37.00px">122</div>
<div class="ln" style="top:113.90px;left:88.20px"><i class="k">"$inventory_hud_horizontal_grid_style"</i>: <i class="w">true</i>,</div>
<div class="lnum" style="top:131.30px;width:37.00px">123</div>
<div class="ln" style="top:131.50px;left:88.20px"><i class="k">"$inventory_hud_toggle"</i>: <i class="w">false</i>,</div>
<div class="lnum" style="top:148.90px;width:37.00px">124</div>
<div class="ln" style="top:149.10px;left:88.20px"><i class="k">"$inventory_hud_toggle_x_offset"</i>: <i class="n">40</i>,</div>
<div class="lnum" style="top:166.50px;width:37.00px">125</div>
<div class="ln" style="top:166.70px;left:88.20px"><i class="k">"$inventory_hud_toggle_y_offset"</i>: <i class="n">3</i>,</div>
<div class="lnum" style="top:184.10px;width:37.00px">126</div>
<div class="ln" style="top:184.30px;left:88.20px"><i class="k">"$inventory_hud_toggle_opacity"</i>: <i class="n">10</i>,</div>
<div class="lnum" style="top:201.70px;width:37.00px">127</div>
<div class="ln" style="top:201.90px;left:74.85px"><i class="k">"$free_slots_viewer"</i>: <i class="w">true</i>,</div>
<div class="lnum" style="top:219.30px;width:37.00px">128</div>
<div class="ln" style="top:219.50px;left:88.20px"><i class="k">"$free_slots_viewer_x_offset"</i>: <i class="n">29</i>,</div>
<div class="lnum" style="top:236.90px;width:37.00px">129</div>
<div class="ln" style="top:237.10px;left:88.20px"><i class="k">"$free_slots_viewer_y_offset"</i>: <i class="n">40</i>,</div>
<div class="lnum" style="top:254.50px;width:37.00px">130</div>
<div class="ln" style="top:254.70px;left:88.20px"><i class="k">"$free_slots_viewer_background_opacity"</i>: <i class="n">6</i>,</div>
<div class="lnum" style="top:272.10px;width:37.00px">131</div>
<div class="ln" style="top:272.30px;left:88.20px"><i class="k">"$free_slots_viewer_show_icon"</i>: <i class="w">true</i>,</div>
<div class="lnum" style="top:289.70px;width:37.00px">132</div>
<div class="ln" style="top:289.90px;left:88.20px"><i class="k">"$free_slots_viewer_color_indicators"</i>: <i class="w">true</i>,</div>
<div class="lnum" style="top:307.30px;width:37.00px">133</div>
<div class="ln" style="top:307.50px;left:88.20px"><i class="k">"$free_slots_viewer_max_slots_text"</i>: <i class="w">true</i>,</div>
<div class="lnum" style="top:324.90px;width:37.00px">134</div>
<div class="ln" style="top:325.10px;left:74.85px"><i class="k">"$durability_viewer"</i>: <i class="w">true</i>,</div>
<div class="lnum" style="top:342.50px;width:37.00px">135</div>
<div class="ln" style="top:342.70px;left:88.20px"><i class="k">"$durability_viewer_x_offset"</i>: <i class="n">10</i>,</div>
<div class="lnum" style="top:360.10px;width:37.00px">136</div>
<div class="ln" style="top:360.30px;left:88.20px"><i class="k">"$durability_viewer_y_offset"</i>: <i class="n">40</i>,</div>
<div class="lnum" style="top:377.70px;width:37.00px">137</div>
<div class="ln" style="top:377.90px;left:88.20px"><i class="k">"$durability_viewer_opacity"</i>: <i class="n">6</i>,</div>
<div class="lnum" style="top:395.30px;width:37.00px">138</div>
<div class="ln" style="top:395.50px;left:88.20px"><i class="k">"$durability_viewer_show_icon"</i>: <i class="w">true</i>,</div>
<div class="lnum" style="top:412.90px;width:37.00px">139</div>
<div class="ln" style="top:413.10px;left:88.20px"><i class="k">"$durability_viewer_color_indicators"</i>: <i class="w">true</i>,</div>
<div class="lnum" style="top:430.50px;width:37.00px">140</div>
<div class="ln" style="top:430.70px;left:88.20px"><i class="k">"$durability_viewer_total_durability_text"</i>: <i class="w">true</i>,</div>
<div class="lnum" style="top:448.10px;width:37.00px">141</div>
<div class="ln" style="top:448.30px;left:74.85px"><i class="k">"$crosshair_item_count"</i>: <i class="w">true</i>,</div>
<div class="lnum" style="top:465.70px;width:37.00px">142</div>
<div class="ln" style="top:465.90px;left:88.20px"><i class="k">"$crosshair_item_count_x_offset"</i>: <i class="n">20</i>,</div>
<div class="lnum" style="top:483.30px;width:37.00px">143</div>
<div class="ln" style="top:483.50px;left:88.20px"><i class="k">"$crosshair_item_count_y_offset"</i>: <i class="n">23</i>,</div>
<div class="lnum" style="top:500.90px;width:37.00px">144</div>
<div class="ln" style="top:501.10px;left:88.20px"><i class="k">"$crosshair_item_count_show_slot_indexes"</i>: <i class="w">true</i>,</div>
<div class="lnum" style="top:518.50px;width:37.00px">145</div>
<div class="ln" style="top:518.70px;left:88.20px"><i class="k">"$crosshair_item_count_use_config_slot_indexes"</i>: <i class="w">true</i>,</div>
<div class="lnum" style="top:536.10px;width:37.00px">146</div>
<div class="ln" style="top:536.30px;left:88.20px"><i class="k">"$crosshair_item_count_show_count_when_slot_is_empty"</i>: <i class="w">true</i>,</div>
<div class="lnum" style="top:553.70px;width:37.00px">147</div>
<div class="ln" style="top:553.90px;left:74.85px"><i class="k">"$slot_switcher"</i>: <i class="w">false</i>,</div>
<div class="lnum" style="top:571.30px;width:37.00px">148</div>
<div class="ln" style="top:571.50px;left:88.20px"><i class="k">"$slot_switcher_x_offset"</i>: <i class="n">36</i>,</div>
<div class="lnum" style="top:588.90px;width:37.00px">149</div>
<div class="ln" style="top:589.10px;left:88.20px"><i class="k">"$slot_switcher_y_offset"</i>: <i class="n">0</i>,</div>
<div class="lnum" style="top:606.50px;width:37.00px">150</div>
<div class="ln" style="top:606.70px;left:88.20px"><i class="k">"$slot_switcher_opacity"</i>: <i class="n">10</i>,</div>
<div class="lnum" style="top:624.10px;width:37.00px">151</div>
<div class="ln" style="top:624.30px;left:88.20px"><i class="k">"$slot_switcher_first_slot_index"</i>: <i class="n">0</i>,</div>
<div class="lnum" style="top:641.70px;width:37.00px">152</div>
<div class="ln" style="top:641.90px;left:88.20px"><i class="k">"$slot_switcher_second_slot_index"</i>: <i class="n">1</i>,</div>
<div class="lnum" style="top:659.30px;width:37.00px">153</div>
<div class="ln" style="top:659.50px;left:88.20px"><i class="k">"$slot_switcher_medium_button_scale"</i>: <i class="w">true</i>,</div>
<div class="lnum" style="top:676.90px;width:37.00px">154</div>
<div class="ln" style="top:677.10px;left:74.85px"><i class="k">"$chat"</i>: <i class="w">true</i>,</div>
<div class="lnum" style="top:694.50px;width:37.00px">155</div>
<div class="ln" style="top:694.70px;left:88.20px"><i class="k">"$chat_x_size"</i>: <i class="n">28</i>,</div>
<div class="lnum" style="top:712.10px;width:37.00px">156</div>
<div class="ln" style="top:712.30px;left:88.20px"><i class="k">"$chat_y_size"</i>: <i class="n">12</i>,</div>
<div class="lnum" style="top:729.70px;width:37.00px">157</div>
<div class="ln" style="top:729.90px;left:88.20px"><i class="k">"$chat_background_opacity"</i>: <i class="n">6</i>,</div>
<div class="lnum" style="top:747.30px;width:37.00px">158</div>
<div class="ln" style="top:747.50px;left:88.20px"><i class="k">"$chat_vertical_padding_size"</i>: <i class="n">20</i>,</div>
<div class="lnum" style="top:764.90px;width:37.00px">159</div>
<div class="ln" style="top:765.10px;left:88.20px"><i class="k">"$chat_bottom_chat"</i>: <i class="w">true</i>,</div>
<div class="lnum" style="top:782.50px;width:37.00px">160</div>
<div class="ln" style="top:782.70px;left:88.20px"><i class="k">"$chat_destroy_message_animation"</i>: <i class="w">true</i>,</div>
<div class="lnum" style="top:800.10px;width:37.00px">161</div>
<div class="ln" style="top:800.30px;left:88.20px"><i class="k">"$chat_animations"</i>: <i class="w">true</i>,</div>
<div class="lnum" style="top:817.70px;width:37.00px">162</div>
<div class="ln" style="top:817.90px;left:74.85px"><i class="k">"$coords"</i>: <i class="w">true</i>,</div>
<div class="lnum" style="top:835.30px;width:37.00px">163</div>
<div class="ln" style="top:835.50px;left:88.20px"><i class="k">"$coords_x_offset"</i>: <i class="n">0</i>,</div>
<div class="lnum" style="top:852.90px;width:37.00px">164</div>
<div class="ln" style="top:853.10px;left:88.20px"><i class="k">"$coords_y_offset"</i>: <i class="n">0</i>,</div>
<div class="lnum" style="top:870.50px;width:37.00px">165</div>
<div class="ln" style="top:870.70px;left:88.20px"><i class="k">"$coords_background_opacity"</i>: <i class="n">6</i>,</div>
<div class="lnum" style="top:888.10px;width:37.00px">166</div>
<div class="ln" style="top:888.30px;left:88.20px"><i class="k">"$coords_text"</i>: <i class="w">true</i>,</div>
<div class="lnum" style="top:905.70px;width:37.00px">167</div>
<div class="ln" style="top:905.90px;left:74.85px"><i class="k">"$nether_coords"</i>: <i class="w">false</i>,</div>
<div class="lnum" style="top:923.30px;width:37.00px">168</div>
<div class="ln" style="top:923.50px;left:88.20px"><i class="k">"$nether_coords_x_offset"</i>: <i class="n">0</i>,</div>
<div class="lnum" style="top:940.90px;width:37.00px">169</div>
<div class="ln" style="top:941.10px;left:88.20px"><i class="k">"$nether_coords_y_offset"</i>: <i class="n">4</i>,</div>
<div class="lnum" style="top:958.50px;width:37.00px">170</div>
<div class="ln" style="top:958.70px;left:88.20px"><i class="k">"$nether_coords_background_opacity"</i>: <i class="n">6</i>,</div>
<div class="lnum" style="top:976.10px;width:37.00px">171</div>
<div class="ln" style="top:976.30px;left:88.20px"><i class="k">"$nether_coords_shortened_texts"</i>: <i class="w">true</i>,</div>
<div class="lnum" style="top:993.70px;width:37.00px">172</div>
<div class="ln" style="top:993.90px;left:88.20px"><i class="k">"$nether_coords_colored_texts"</i>: <i class="w">true</i>,</div>
<div style="position:absolute;left:0;top:0;width:631px;height:1px;background:#171717"></div>
<div style="position:absolute;left:0;top:1px;width:631px;height:1px;background:#1b1b1b"></div>
</div><div style="position:absolute;left:631px;top:63px;width:1px;height:1007px;background:#1a1a1a"></div>
<div style="position:absolute;left:632px;top:195px;width:13px;height:2px;background:#8c8c8c"></div>
<div style="position:absolute;left:1274px;top:63px;width:1px;height:1007px;background:#1b1b1b"></div>
<div style="position:absolute;left:1275px;top:200px;width:13px;height:132px;background:#474747"></div>
<div style="position:absolute;left:1275px;top:332px;width:13px;height:2px;background:#7e7e7e"></div>
<div style="position:absolute;left:1912px;top:63px;width:1px;height:1007px;background:#1c1c1c"></div>
<div style="position:absolute;left:1919px;top:63px;width:1px;height:1007px;background:#1a1a1a"></div>
</body></html>
